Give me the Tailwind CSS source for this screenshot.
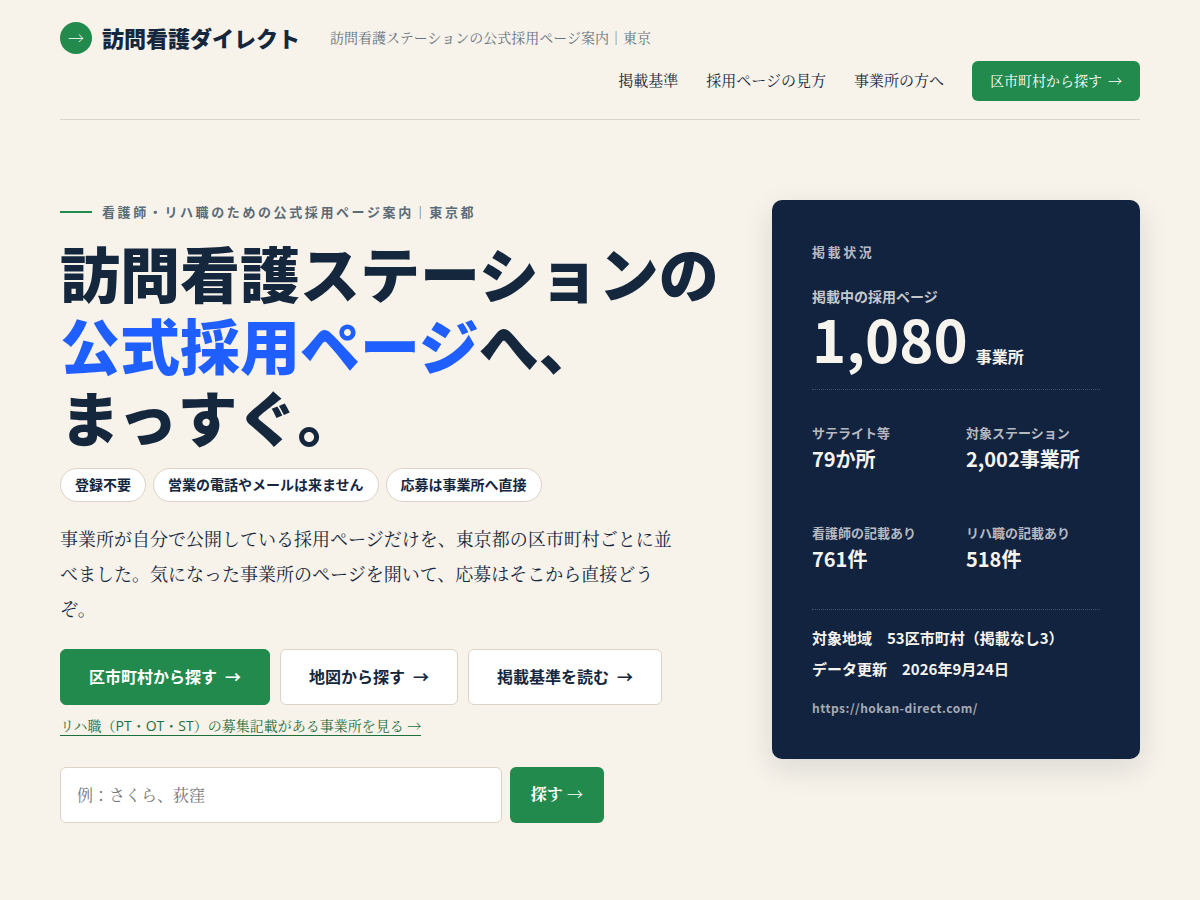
<!DOCTYPE html>
<html lang="ja">
<head>
<meta charset="utf-8">
<meta name="viewport" content="width=device-width, initial-scale=1">
<title>訪問看護ダイレクト</title>
<script src="https://cdn.jsdelivr.net/npm/@tailwindcss/browser@4"></script>
</head>
<body class="min-h-screen bg-[#f7f2ea] font-['Open_Sans','Noto_Serif_CJK_JP',sans-serif] text-[#14273d]">
<div class="mx-auto max-w-[1128px] px-6">
  <header class="flex flex-col border-b border-[#d9d5cd] pt-[22px] pb-[18px]">
    <div class="flex flex-wrap items-center gap-x-[30px]">
      <a href="#" class="flex items-center gap-[10px]">
        <span class="flex size-8 items-center justify-center rounded-full bg-[#218a4c] text-base text-white">→</span>
        <span class="pb-[2px] font-['Noto_Sans_CJK_JP',sans-serif] text-[22px] leading-[30px] font-extrabold">訪問看護ダイレクト</span>
      </a>
      <p class="text-sm text-[#66747f]">訪問看護ステーションの公式採用ページ案内｜東京</p>
    </div>
    <nav class="mt-[7px] flex flex-wrap items-center justify-end gap-7 text-[15px]">
      <a href="#" class="pb-[2px]">掲載基準</a>
      <a href="#" class="pb-[2px]">採用ページの見方</a>
      <a href="#" class="pb-[2px]">事業所の方へ</a>
      <a href="#" class="flex h-10 items-center rounded-md bg-[#218a4c] px-[18px] text-sm text-white"><span>区市町村から探す</span><span class="ml-[6px]">→</span></a>
    </nav>
  </header>

  <main class="grid items-start gap-12 pt-20 pb-[77px] lg:grid-cols-[minmax(0,1fr)_368px]">
    <section>
      <p class="flex items-center gap-[10px] font-['Noto_Sans_CJK_JP',sans-serif] text-[13px] leading-6 font-bold tracking-[0.2em] text-[#5b6b78]">
        <span class="h-[2px] w-8 bg-[#218a4c]"></span>看護師・リハ職のための公式採用ページ案内｜東京都
      </p>
      <h1 class="mt-3 font-['Noto_Sans_CJK_JP',sans-serif] text-[60px] leading-[72px] font-black">訪問看護ステーションの<br><span class="text-[#1f5eff]">公式採用ページ</span>へ、<br>まっすぐ。</h1>
      <ul class="mt-4 flex flex-wrap gap-[7px] font-['Noto_Sans_CJK_JP',sans-serif] text-sm font-bold">
        <li class="flex h-[34px] items-center rounded-full border border-[#ddd3c6] bg-white px-[14px] pb-[2px]">登録不要</li>
        <li class="flex h-[34px] items-center rounded-full border border-[#ddd3c6] bg-white px-[14px] pb-[2px]">営業の電話やメールは来ません</li>
        <li class="flex h-[34px] items-center rounded-full border border-[#ddd3c6] bg-white px-[14px] pb-[2px]">応募は事業所へ直接</li>
      </ul>
      <p class="mt-5 max-w-[620px] text-lg leading-[35px]">事業所が自分で公開している採用ページだけを、東京都の区市町村ごとに並べました。気になった事業所のページを開いて、応募はそこから直接どうぞ。</p>
      <div class="mt-[22px] flex flex-wrap gap-[10px] font-['Noto_Sans_CJK_JP',sans-serif] text-base font-bold">
        <a href="#" class="flex h-14 items-center gap-2 rounded-md border border-[#218a4c] bg-[#218a4c] px-7 pb-[2px] text-white"><span>区市町村から探す</span><span>→</span></a>
        <a href="#" class="flex h-14 items-center gap-2 rounded-md border border-[#ddd3c6] bg-white px-7 pb-[2px]"><span>地図から探す</span><span>→</span></a>
        <a href="#" class="flex h-14 items-center gap-2 rounded-md border border-[#ddd3c6] bg-white px-7 pb-[2px]"><span>掲載基準を読む</span><span>→</span></a>
      </div>
      <a href="#" class="mt-3 inline-block border-b border-[#1c7040] text-sm leading-[18px] text-[#1c7040]">リハ職（PT・OT・ST）の募集記載がある事業所を見る →</a>
      <form class="mt-[30px] flex max-w-[544px] gap-2">
        <input type="search" aria-label="事業所名・地名" placeholder="例：さくら、荻窪" class="h-14 min-w-0 flex-1 rounded-md border border-[#ddd3c6] bg-white px-4 text-base placeholder:text-[#757575]">
        <button type="button" class="h-14 rounded-md bg-[#218a4c] px-[21px] pb-[2px] text-base font-bold text-white">探す →</button>
      </form>
    </section>

    <aside class="rounded-[10px] bg-[#12233f] px-10 pt-10 pb-[39px] font-['Noto_Sans_CJK_JP',sans-serif] font-bold text-[#f7f4ee] shadow-[0_10px_30px_rgba(20,39,61,0.12)]">
      <h2 class="text-[13px] leading-6 tracking-[0.2em] text-[#b6bac0]">掲載状況</h2>
      <p class="mt-5 text-sm leading-6 text-[#c5c8cb]">掲載中の採用ページ</p>
      <p class="flex items-baseline gap-2 border-b border-dotted border-[#43506a] pb-[21px]"><span class="text-[58px] leading-[60px] font-bold">1,080</span><span class="text-base">事業所</span></p>
      <dl class="grid grid-cols-2 gap-x-5 gap-y-12 border-b border-dotted border-[#43506a] pt-8 pb-[35px]">
        <div><dt class="text-[13px] leading-[22px] text-[#b6bac0]">サテライト等</dt><dd class="text-xl leading-[30px]">79か所</dd></div>
        <div><dt class="text-[13px] leading-[22px] text-[#b6bac0]">対象ステーション</dt><dd class="text-xl leading-[30px]">2,002事業所</dd></div>
        <div><dt class="text-[13px] leading-[22px] text-[#b6bac0]">看護師の記載あり</dt><dd class="text-xl leading-[30px]">761件</dd></div>
        <div><dt class="text-[13px] leading-[22px] text-[#b6bac0]">リハ職の記載あり</dt><dd class="text-xl leading-[30px]">518件</dd></div>
      </dl>
      <p class="mt-3 text-[15px] leading-[31px]">対象地域　53区市町村（掲載なし3）<br>データ更新　2026年9月24日</p>
      <p class="mt-3 text-xs leading-6 tracking-[0.04em] text-[#a6abb3]">https://hokan-direct.com/</p>
    </aside>
  </main>
</div>
</body>
</html>
